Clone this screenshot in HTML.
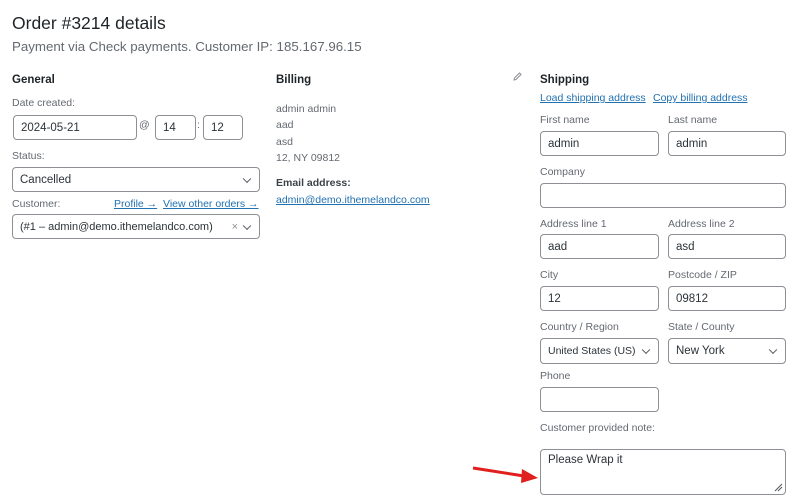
<!DOCTYPE html>
<html><head><meta charset="utf-8"><style>
*{box-sizing:border-box;margin:0;padding:0}
body{width:803px;height:503px;background:#fff;font-family:"Liberation Sans",sans-serif;color:#3c434a;position:relative;overflow:hidden;font-size:10.5px}
.a{position:absolute;white-space:nowrap}
.lbl{color:#646970;font-size:10.5px}
.h{font-weight:bold;color:#1d2327;font-size:11.5px}
.in{position:absolute;border:1px solid #8c8f94;border-radius:4px;background:#fff;color:#2c3338;font-size:11.5px;padding-left:7px;display:flex;align-items:center;white-space:nowrap}
.lnk{color:#2271b1;text-decoration:underline}
.chev{position:absolute;right:9px;top:50%;width:6px;height:6px;border-right:1.2px solid #50575e;border-bottom:1.2px solid #50575e;transform:translateY(-70%) rotate(45deg)}
</style></head><body>
<div class="a" style="left:12px;top:13px;font-size:17.5px;color:#1d2327">Order #3214 details</div>
<div class="a" style="left:12px;top:39px;font-size:13.3px;color:#646970">Payment via Check payments. Customer IP: 185.167.96.15</div>

<div class="a h" style="left:12px;top:74px">General</div>
<div class="a lbl" style="left:12px;top:97px">Date created:</div>
<div class="in" style="left:13px;top:115px;width:124px;height:25px">2024-05-21</div>
<div class="a lbl" style="left:139px;top:119px">@</div>
<div class="in" style="left:155px;top:115px;width:41px;height:25px">14</div>
<div class="a lbl" style="left:197px;top:119px">:</div>
<div class="in" style="left:203px;top:115px;width:40px;height:25px">12</div>
<div class="a lbl" style="left:12px;top:150px">Status:</div>
<div class="in" style="left:12px;top:167px;width:248px;height:25px">Cancelled<span class="chev"></span></div>
<div class="a lbl" style="left:12px;top:198px">Customer:</div>
<div class="a lnk" style="left:114px;top:198px">Profile →</div>
<div class="a lnk" style="left:163px;top:198px">View other orders →</div>
<div class="in" style="left:12px;top:214px;width:248px;height:25px;font-size:11px">(#1 – admin@demo.ithemelandco.com)<span class="a" style="right:21px;top:6px;color:#8c8f94;font-size:11px">×</span><span class="chev"></span></div>

<div class="a h" style="left:276px;top:74px">Billing</div>
<div class="a lbl" style="left:276px;top:101px;line-height:16.3px">admin admin<br>aad<br>asd<br>12, NY 09812</div>
<div class="a" style="left:276px;top:177px;font-weight:bold;color:#3c434a">Email address:</div>
<div class="a lnk" style="left:276px;top:194px">admin@demo.ithemelandco.com</div>

<svg class="a" style="left:513px;top:72px" width="9" height="9" viewBox="0 0 9 9"><path d="M1 8 L1.5 6 L6.5 1 L8 2.5 L3 7.5 Z" fill="none" stroke="#8c8f94" stroke-width="1"/></svg>
<div class="a h" style="left:540px;top:74px">Shipping</div>
<div class="a lnk" style="left:540px;top:92px">Load shipping address</div>
<div class="a lnk" style="left:653px;top:92px">Copy billing address</div>

<div class="a lbl" style="left:540px;top:114px">First name</div>
<div class="a lbl" style="left:668px;top:114px">Last name</div>
<div class="in" style="left:540px;top:131px;width:119px;height:25px">admin</div>
<div class="in" style="left:668px;top:131px;width:118px;height:25px">admin</div>
<div class="a lbl" style="left:540px;top:166px">Company</div>
<div class="in" style="left:540px;top:183px;width:246px;height:25px"></div>
<div class="a lbl" style="left:540px;top:218px">Address line 1</div>
<div class="a lbl" style="left:668px;top:218px">Address line 2</div>
<div class="in" style="left:540px;top:234px;width:119px;height:25px">aad</div>
<div class="in" style="left:668px;top:234px;width:118px;height:25px">asd</div>
<div class="a lbl" style="left:540px;top:269px">City</div>
<div class="a lbl" style="left:668px;top:269px">Postcode / ZIP</div>
<div class="in" style="left:540px;top:286px;width:119px;height:25px">12</div>
<div class="in" style="left:668px;top:286px;width:118px;height:25px">09812</div>
<div class="a lbl" style="left:540px;top:321px">Country / Region</div>
<div class="a lbl" style="left:668px;top:321px">State / County</div>
<div class="in" style="left:540px;top:338px;width:119px;height:26px;font-size:10.5px">United States (US)<span class="chev"></span></div>
<div class="in" style="left:668px;top:338px;width:118px;height:26px">New York<span class="chev"></span></div>
<div class="a lbl" style="left:540px;top:370px">Phone</div>
<div class="in" style="left:540px;top:387px;width:119px;height:25px"></div>
<div class="a lbl" style="left:540px;top:422px">Customer provided note:</div>
<div class="in" style="left:540px;top:449px;width:246px;height:46px;align-items:flex-start;padding-top:4px">Please Wrap it
<svg style="position:absolute;right:2px;bottom:2px" width="9" height="9"><path d="M1 8L8 1M4 8L8 4" stroke="#50575e" stroke-width="1"/></svg></div>
<svg class="a" style="left:470px;top:462px" width="72" height="24"><path d="M3 6 L54 14" stroke="#e0201e" stroke-width="3"/><path d="M52 7 L68 16 L51 21 Z" fill="#e0201e"/></svg>
</body></html>
